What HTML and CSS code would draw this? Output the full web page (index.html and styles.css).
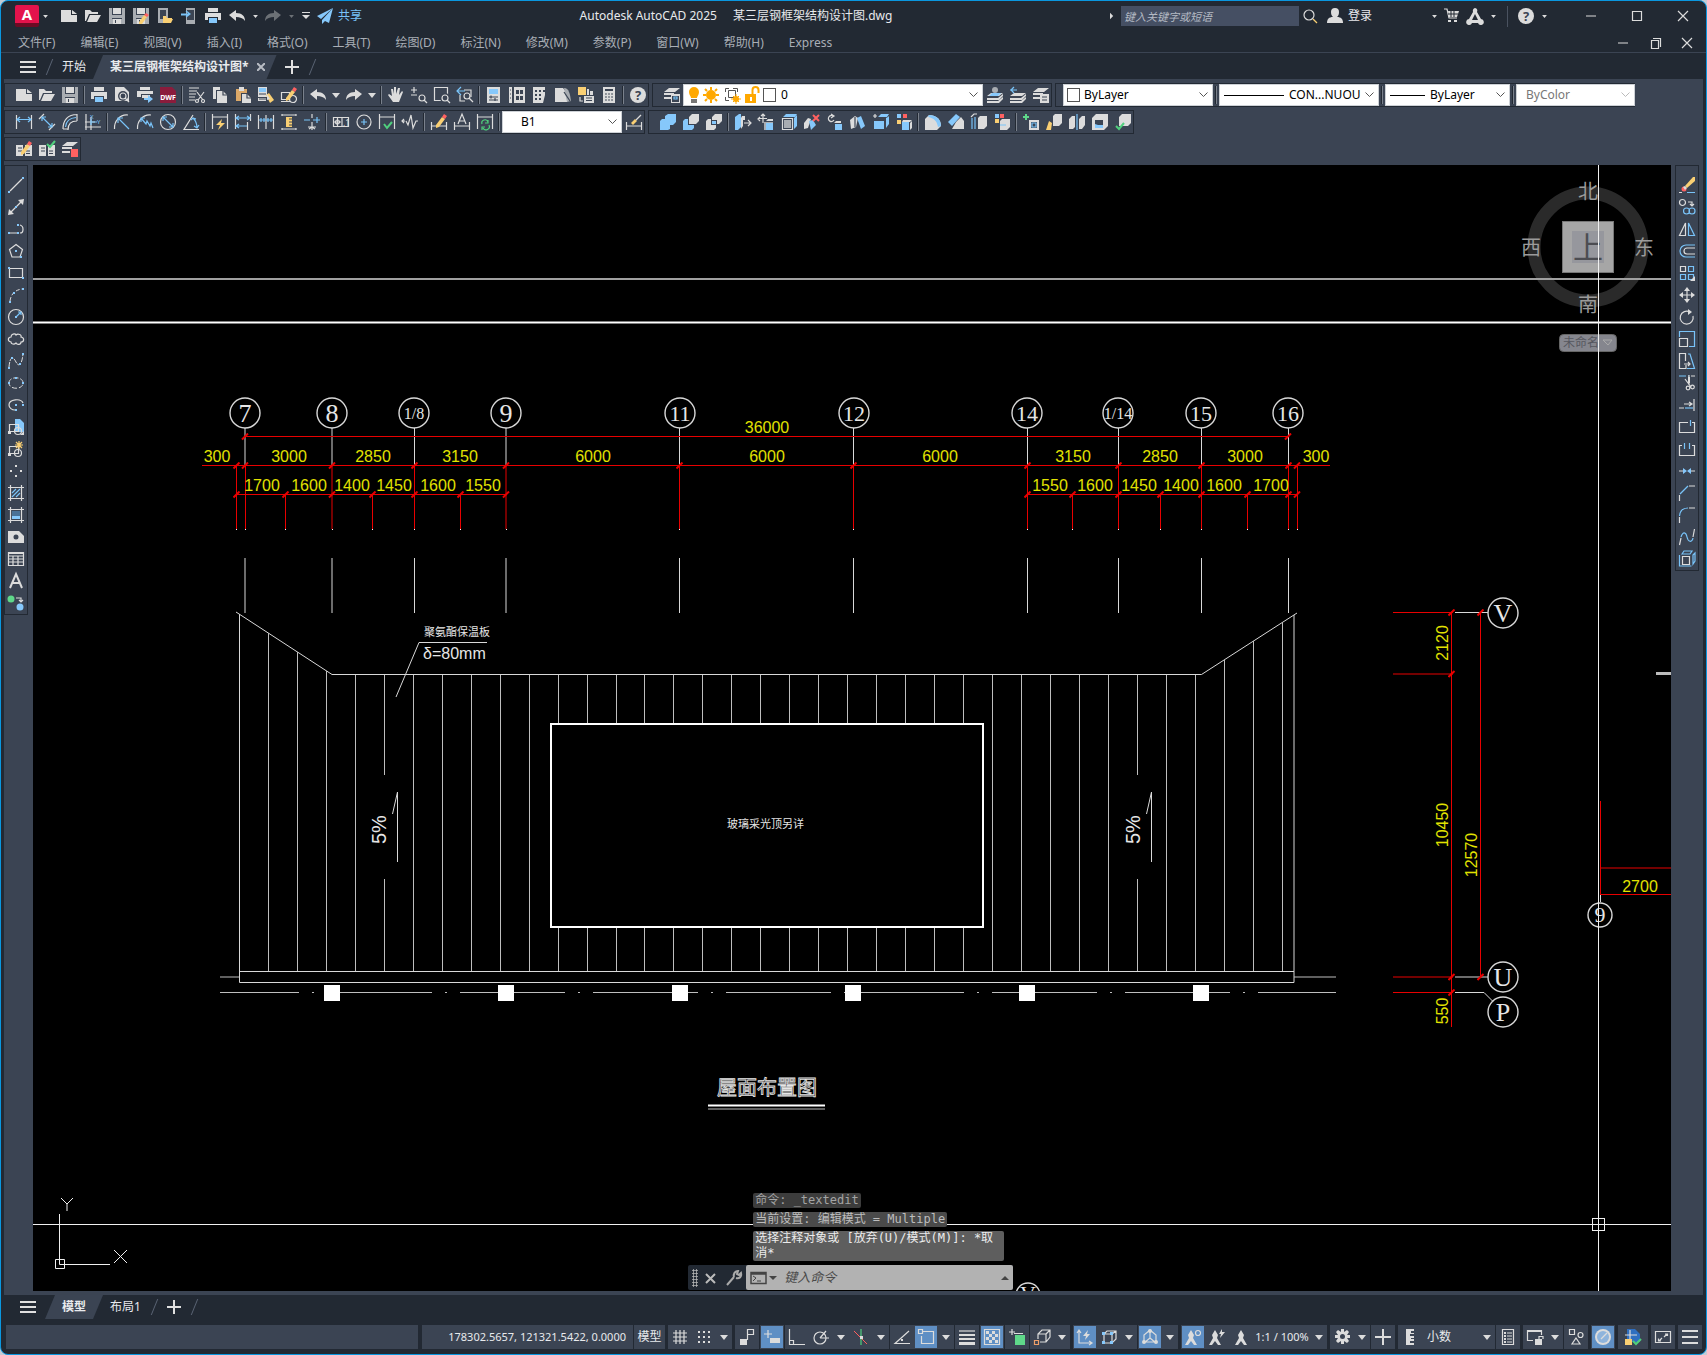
FILE: index.html
```html
<!DOCTYPE html>
<html lang="zh-CN">
<head>
<meta charset="utf-8">
<title>Autodesk AutoCAD 2025 - 某三层钢框架结构设计图.dwg</title>
<link rel="stylesheet" href="styles.css">
</head>
<body>
<div class="app">
  <header class="titlebar">
    <div class="quick">
      <button class="logo" aria-label="应用程序菜单">A</button>
      <span data-tools="v"></span>
      <div class="quick-tools" data-tools="new open save saveas mobopen mobsave print undo v redoOff vOff custom"></div>
      <button class="share"><svg viewBox="0 0 16 16" class="icon"><path class="B" d="M16 0 0 8l4 3zM16 0 5 12v4l3-3 4 2z"/></svg>共享</button>
    </div>
    <h1 class="title"><span>Autodesk AutoCAD 2025</span><span>某三层钢框架结构设计图.dwg</span></h1>
    <div class="account">
      <svg class="caret-right" viewBox="0 0 5 8"><path class="W" d="M0 0l4 4-4 4z"/></svg>
      <input class="search" type="text" aria-label="搜索" placeholder="键入关键字或短语">
      <span data-tools="find"></span>
      <button class="login"><svg viewBox="0 0 16 16" class="icon"><path class="W" d="M4 4a4 4 0 1 1 8 0c0 3-1 4-2 5 4 0 6 2 6 6H0c0-4 2-6 6-6-1-1-2-2-2-5z"/></svg>登录</button>
      <span data-tools="v cart autodesk v"></span>
      <i class="rule"></i>
      <span data-tools="help v"></span>
      <div class="window-buttons" data-tools="min max close"></div>
    </div>
  </header>

  <nav class="menubar">
    <div class="menus">
      <a href="#">文件(F)</a><a href="#">编辑(E)</a><a href="#">视图(V)</a><a href="#">插入(I)</a><a href="#">格式(O)</a><a href="#">工具(T)</a><a href="#">绘图(D)</a><a href="#">标注(N)</a><a href="#">修改(M)</a><a href="#">参数(P)</a><a href="#">窗口(W)</a><a href="#">帮助(H)</a><a href="#">Express</a>
    </div>
    <div class="doc-buttons" data-tools="min restore close"></div>
  </nav>

  <div class="tabs tabs-files">
    <button class="burger" aria-label="文件选项卡菜单"><i></i><i></i><i></i></button>
    <i class="slash"></i>
    <button class="tab">开始</button>
    <button class="tab active">某三层钢框架结构设计图*<svg class="tab-close" viewBox="0 0 8 8"><path d="M0 0l8 8M8 0L0 8"/></svg></button>
    <button class="plus" aria-label="新建"></button>
    <i class="slash"></i>
  </div>

  <main class="work">
    <div class="bars">
      <div class="bar-row">
        <div class="bar"><i class="grip"></i><span data-tools="new open save | print preview publish dwf | cut copy paste match block | undo V redo V | hand zoomrt zoomwin zoomprev | props center2 palettes sheets markup calc | help"></span></div>
        <div class="bar"><i class="grip"></i><span data-tools="layers"></span>
          <div class="combo combo-layer"><svg viewBox="0 0 79 20" class="layer-state"><path d="M5 7a5 5 0 1 1 10 0c0 3-2 4-2 6H7c0-2-2-3-2-6z" fill="#ffa800"/><path d="M7 14h6v4H7z" fill="#777"/><circle cx="27" cy="10" r="5" fill="#ffa800"/><path d="M27 2v3M27 15v3M19 10h3M32 10h3M21 4l2 2M33 4l-2 2M21 16l2-2M33 16l-2-2" stroke="#ffa800" stroke-width="2"/><path d="M41.500 7V3.500H45M49 3.500h4.500V7M41.500 12v3.500H45M44.500 5.500h7v7h-7z" stroke="#555" fill="none"/><circle cx="52" cy="14" r="3" fill="#ffa800"/><path d="M52 9v10M47 14h10M49 11l6 6M55 11l-6 6" stroke="#ffa800"/><path d="M61 9h11v9H61z" fill="#ffa800"/><path d="M68.500 9V5a3 3 0 0 1 6 0v3" stroke="#ffa800" stroke-width="2" fill="none"/><path d="M66 12h2v4h-2z" fill="#fff"/></svg><i class="swatch"></i><select aria-label="图层"><option>0</option></select></div>
          <span data-tools="laycur layprev laystate"></span></div>
        <div class="bar"><i class="grip"></i>
          <div class="combo combo-color"><i class="swatch"></i><select aria-label="颜色"><option>ByLayer</option></select></div><i class="sep"></i>
          <div class="combo combo-linetype"><i class="sample"></i><select aria-label="线型"><option>CON...NUOU</option></select></div><i class="sep"></i>
          <div class="combo combo-weight"><i class="sample"></i><select aria-label="线宽"><option>ByLayer</option></select></div><i class="sep"></i>
          <div class="combo combo-plot"><select aria-label="打印样式" disabled><option>ByColor</option></select></div></div>
      </div>
      <div class="bar-row">
        <div class="bar"><i class="grip"></i><span data-tools="dimlin dimali dimarc dimord | dimrad dimjog dimdia dimang | dimquick dimbase dimcont dimspace dimbreak | tol cmark inspect jogline | dimedit dimtext dimupdate |"></span>
          <div class="combo combo-dim"><select aria-label="标注样式"><option>B1</option></select></div><span data-tools="dimstyle"></span></div>
        <div class="bar"><i class="grip"></i><span data-tools="union subtract intersect | extrude moveface offface delface rotface taper copyface colface | filletedge chamedge copyedge coledge | imprint clean separate shell check"></span></div>
      </div>
      <div class="bar-row">
        <div class="bar"><i class="grip"></i><span data-tools="refedit refsave refdel"></span></div>
      </div>
    </div>

    <div class="stage">
      <aside class="side side-left"><i class="grip"></i><span data-tools="line xline pline polygon rect arc circle cloud spline ellipse ellarc insert mkblock points hatch gradient region table mtext addsel"></span></aside>
      <section class="canvas">
        <svg class="drawing" viewBox="33 165 1638 1126" role="img" aria-label="屋面布置图">
          <defs>
            <marker id="tick" markerUnits="userSpaceOnUse" markerWidth="8" markerHeight="8" refX="4" refY="4"><path d="M1 7l6-6" stroke="#e80000" stroke-width="2"/></marker>
            <marker id="tickv" markerUnits="userSpaceOnUse" markerWidth="8" markerHeight="8" refX="4" refY="4"><path d="M1 7l6-6" stroke="#e80000" stroke-width="2"/></marker>
          </defs>

          <!-- view cube -->
          <circle cx="1588" cy="247" r="54" fill="none" stroke="#2a2a2a" stroke-width="13"/>
          <rect x="1562.500" y="221.500" width="51" height="51" fill="#a6a6a6" stroke="#777"/>
          <rect x="1572" y="231" width="32" height="32" fill="#96979d"/>
          <text class="cube-face" x="1588" y="258">上</text>
          <g class="compass"><text x="1588" y="199">北</text><text x="1588" y="312">南</text><text x="1531" y="255">西</text><text x="1644" y="255">东</text></g>
          <rect x="1559.500" y="334.500" width="57" height="17" rx="4" fill="#85868e" stroke="#666"/>
          <text class="ucs-name" x="1563" y="347">未命名</text>
          <path d="M1603 340h9l-4 5z" fill="none" stroke="#aaa"/>

          <path class="frame-thin" d="M33 279h1638"/>
          <path class="frame-thick" d="M33 322.500h1638"/>

          <!-- axis grid -->
          <g class="axis">
            <path d="M245 428v38M332 428v38M414.500 428v38M506 428v38M679.500 428v38M853.500 428v38M1027.500 428v38M1118.500 428v38M1201.500 428v38M1288.500 428v38"/>
            <path d="M245 558v55M332 558v55M414.500 558v55M506 558v55M679.500 558v55M853.500 558v55M1027.500 558v55M1118.500 558v55M1201.500 558v55M1288.500 558v55"/>
            <path d="M1455 612.500h33M1455 977h33M1455 992.500h29l9 9M1600.500 894v8"/>
            <circle cx="245" cy="413" r="15"/><circle cx="332" cy="413" r="15"/><circle cx="414" cy="413" r="15"/><circle cx="506" cy="413" r="15"/><circle cx="680" cy="413" r="15"/><circle cx="854" cy="413" r="15"/><circle cx="1027" cy="413" r="15"/><circle cx="1118" cy="413" r="15"/><circle cx="1201" cy="413" r="15"/><circle cx="1288" cy="413" r="15"/>
            <circle cx="1503" cy="613" r="15"/><circle cx="1503" cy="977" r="15"/><circle cx="1503" cy="1012" r="15"/><circle cx="1600" cy="915" r="12"/><circle cx="1028" cy="1295" r="12"/>
          </g>
          <g class="bubble"><text x="245" y="422">7</text><text x="332" y="422">8</text><text x="506" y="422">9</text><text x="1503" y="622">V</text><text x="1503" y="986">U</text><text x="1503" y="1021">P</text></g>
          <g class="bubble two"><text x="680" y="421">11</text><text x="854" y="421">12</text><text x="1027" y="421">14</text><text x="1201" y="421">15</text><text x="1288" y="421">16</text><text x="1600" y="922">9</text><text x="1028" y="1301">V</text></g>
          <g class="bubble frac"><text x="414" y="419">1/8</text><text x="1118" y="419">1/14</text></g>

          <!-- horizontal and vertical dimensions -->
          <g class="dim">
            <path class="ticked" d="M245 436.500H1288"/>
            <path d="M202 465.500H1330"/>
            <path class="ticked" d="M236.500 465.500H245H332H414.500H506H679.500H853.500H1027.500H1118.500H1201.500H1288.500H1297"/>
            <path class="ticked" d="M236.500 494.500H285.500H332H372.500H414.500H460.500H506"/>
            <path class="ticked" d="M1027.500 494.500H1072.500H1118.500H1160.500H1201.500H1247.500H1288.500H1297"/>
            <path d="M236.500 466v63M245.500 466v63M285.500 495v34M332 466v63M372.500 495v34M414.500 466v63M460.500 495v34M506 466v63M679.500 466v63M853.500 466v63M1027.500 466v63M1072.500 495v34M1118.500 466v63M1160.500 495v34M1201.500 466v63M1247.500 495v34M1288.500 466v63M1297.500 466v63"/>
            <path d="M1393 612.500h60M1393 674h60M1393 977h60M1393 992.500h60M1451.500 992v35"/>
            <path class="ticked-v" d="M1451.500 612.500V674V977V992.500"/>
            <path class="ticked-v" d="M1480.500 612.500V977"/>
            <path d="M1600.500 801v94M1601 868h70M1601 894.500h70"/>
            <path class="dots" d="M236 529.500h1M245 529.500h1M285 529.500h1M332 529.500h1M372 529.500h1M414 529.500h1M460 529.500h1M506 529.500h1M679 529.500h1M853 529.500h1M1027 529.500h1M1072 529.500h1M1118 529.500h1M1160 529.500h1M1201 529.500h1M1247 529.500h1M1288 529.500h1M1297 529.500h1"/>
          </g>
          <g class="dim-text">
            <text x="767" y="433">36000</text>
            <text x="217" y="462">300</text><text x="289" y="462">3000</text><text x="373" y="462">2850</text><text x="460" y="462">3150</text><text x="593" y="462">6000</text><text x="767" y="462">6000</text><text x="940" y="462">6000</text><text x="1073" y="462">3150</text><text x="1160" y="462">2850</text><text x="1245" y="462">3000</text><text x="1316" y="462">300</text>
            <text x="262" y="491">1700</text><text x="309" y="491">1600</text><text x="352" y="491">1400</text><text x="394" y="491">1450</text><text x="438" y="491">1600</text><text x="483" y="491">1550</text>
            <text x="1050" y="491">1550</text><text x="1095" y="491">1600</text><text x="1139" y="491">1450</text><text x="1181" y="491">1400</text><text x="1224" y="491">1600</text><text x="1271" y="491">1700</text>
            <text x="1640" y="892">2700</text>
            <text transform="translate(1448 643) rotate(-90)">2120</text><text transform="translate(1448 825) rotate(-90)">10450</text><text transform="translate(1477 855) rotate(-90)">12570</text><text transform="translate(1448 1011) rotate(-90)">550</text>
          </g>

          <!-- roof plan -->
          <g class="roof">
            <path class="edge" d="M236 612l96 62.500h869.500L1297 613M239.500 614v368.500H1294V615M239.500 971.500H1294"/>
            <path d="M268.500 633v338M297.500 652v319M326.500 671v300M355.500 675v296M384.500 675v100M384.500 879v92M413.500 675v296M442.500 675v296M471.500 675v296M500.500 675v296M529.500 675v296M992.500 675v296M1021.500 675v296M1050.500 675v296M1079.500 675v296M1108.500 675v296M1137.500 675v100M1137.500 879v92M1166.500 675v296M1195.500 675v296M1224.500 660v311M1253.500 641v330M1282.500 622v349"/>
            <path d="M558.500 675v48M587.500 675v48M616.500 675v48M644.500 675v48M673.500 675v48M702.500 675v48M731.500 675v48M760.500 675v48M789.500 675v48M818.500 675v48M847.500 675v48M876.500 675v48M905.500 675v48M934.500 675v48M963.500 675v48"/>
            <path d="M558.500 928v43M587.500 928v43M616.500 928v43M644.500 928v43M673.500 928v43M702.500 928v43M731.500 928v43M760.500 928v43M789.500 928v43M818.500 928v43M847.500 928v43M876.500 928v43M905.500 928v43M934.500 928v43M963.500 928v43"/>
            <path d="M220 977h19M1294 977h42"/>
            <path d="M220 992.500h1116" stroke-dasharray="105 13 2 13" stroke-dashoffset="26"/>
            <rect class="skylight" x="551" y="724" width="432" height="203"/>
            <path class="edge" d="M397.500 862v-70l-5 22M1151.500 862v-70l-5 22M396 697l23-54.500h68"/>
          </g>
          <path fill="#fff" d="M324 985h16v16h-16zM498 985h16v16h-16zM672 985h16v16h-16zM845 985h16v16h-16zM1019 985h16v16h-16zM1193 985h16v16h-16z"/>
          <g class="note">
            <text x="424" y="636">聚氨酯保温板</text>
            <text x="727" y="828">玻璃采光顶另详</text>
            <text class="latin" x="423" y="659">δ=80mm</text>
            <text class="slope" transform="translate(386 844) rotate(-90)">5%</text>
            <text class="slope" transform="translate(1140 844) rotate(-90)">5%</text>
            <text class="caption" x="717" y="1095">屋面布置图</text>
          </g>
          <path d="M708 1105.500h117" stroke="#fff" stroke-width="2"/>
          <path d="M708 1109h117" stroke="#bbb"/>
          <path d="M1656 673.500h15" stroke="#bbb" stroke-width="3"/>

          <!-- UCS icon and crosshair -->
          <g class="ucs"><path d="M59.500 1214v50.500H110M55.500 1259.500h9v9h-9z"/><path d="M61 1198l6 6 6-6M67 1204v7M114 1250l13 13M127 1250l-13 13"/></g>
          <g class="cross"><path d="M1598.500 165v1126M33 1224.500h1638"/><rect x="1592.500" y="1218.500" width="12" height="12"/></g>
        </svg>

        <div class="command">
          <p class="log old">命令: _textedit</p>
          <p class="log">当前设置: 编辑模式 = Multiple</p>
          <p class="log recent">选择注释对象或 [放弃(U)/模式(M)]: *取消*</p>
          <div class="command-line">
            <i class="command-grip"></i><span class="command-tools" data-tools="x wrench"></span>
            <label class="prompt"><svg viewBox="0 0 28 14"><path d="M1 1.500h15v11H1zM1 3h15" fill="none" stroke="#444" stroke-width="1.500"/><path d="M3 5l3 2-3 3M7 10h4" fill="none" stroke="#444"/><path d="M19 5h8l-4 4z" fill="#444"/></svg><input type="text" placeholder="键入命令" aria-label="命令"><svg class="up" viewBox="0 0 8 4"><path d="M0 4l4-4 4 4z" fill="#444"/></svg></label>
          </div>
        </div>
      </section>
      <aside class="side side-right"><i class="grip"></i><span data-tools="erase copyobj mirror offset array move rotate scale stretch trim extend breakpt break join chamfer fillet blend explode"></span></aside>
    </div>
  </main>

  <div class="tabs tabs-layout">
    <button class="burger" aria-label="布局菜单"><i></i><i></i><i></i></button>
    <button class="tab active">模型</button>
    <button class="tab">布局1</button>
    <i class="slash"></i>
    <button class="plus" aria-label="新建布局"></button>
    <i class="slash"></i>
  </div>

  <footer class="status">
    <div class="seg fill"></div>
    <div class="group"><button class="seg coords">178302.5657, 121321.5422, 0.0000</button><button class="seg model">模型</button></div>
    <div class="group"><div class="seg" data-tools="grid snap v"></div></div>
    <div class="group"><div class="seg" data-tools="infer"></div><div class="seg" data-tools="dyn*"></div><div class="seg" data-tools="ortho polar v iso v"></div><div class="seg" data-tools="otrack osnap* v"></div><div class="seg" data-tools="lweight"></div><div class="seg" data-tools="transp*"></div><div class="seg" data-tools="cycle"></div><div class="seg" data-tools="osnap3d v"></div></div>
    <div class="group"><div class="seg" data-tools="ducs* filter v"></div><div class="seg" data-tools="gizmo* v"></div></div>
    <div class="group"><div class="seg"><span data-tools="annvis* annauto ann"></span><button class="scale">1:1 / 100%</button><span data-tools="v"></span></div></div>
    <div class="group"><div class="seg" data-tools="gear v"></div><div class="seg" data-tools="add"></div></div>
    <div class="group"><div class="seg"><span data-tools="ruler"></span><button class="units">小数</button><span data-tools="v"></span></div><div class="seg" data-tools="qprops"></div></div>
    <div class="group"><div class="seg" data-tools="lockui v"></div><div class="seg" data-tools="isolate"></div></div>
    <div class="group"><div class="seg" data-tools="perf*"></div></div>
    <div class="group"><div class="seg wide" data-tools="trusted"></div></div>
    <div class="group"><div class="seg" data-tools="full"></div></div>
    <div class="group"><div class="seg" data-tools="menu"></div></div>
  </footer>
</div>
<script src="icons.js"></script>
</body>
</html>
```
FILE: styles.css
```css
* { box-sizing: border-box; }
html { background: #c3ccd6; }
body {
  margin: 0;
  font: 12px/16px "Noto Sans", "Noto Sans CJK SC", sans-serif;
  color: #e8eaed;
}
button { font: inherit; color: inherit; background: none; border: 0; padding: 0; margin: 0; }
svg { display: block; }
span[data-tools] { display: contents; }

.app {
  min-height: 100vh;
  display: flex;
  flex-direction: column;
  background: #222933;
  border: 1px solid #0a97e0;
  border-radius: 8px;
  overflow: hidden;
}

/* icon colours: lower case strokes, upper case fills */
.w, .b, .y, .g, .r, .k, .o { fill: none; stroke-width: 1.2; }
.w { stroke: #dcdcdc; } .b { stroke: #79c3f8; } .y { stroke: #f9cf73; } .g { stroke: #4fcf7d; }
.r { stroke: #ff5f5f; } .k { stroke: #3b4453; } .o { stroke: #f0a06a; }
.W { fill: #dcdcdc; } .B { fill: #86c8fb; } .Y { fill: #f9cf73; } .G { fill: #5fd88a; }
.R { fill: #ff6161; } .K { fill: #3b4453; } .A { fill: #a9adb2; } .D { fill: #6b7079; }
.icon { width: 16px; height: 16px; overflow: visible; }
.tool { width: 23px; height: 22px; flex: none; display: flex; align-items: center; justify-content: center; }
.drop { width: 13px; flex: none; display: flex; align-items: center; justify-content: center; }
.drop svg { width: 8px; height: 5px; }
.off { opacity: .4; }

/* title bar */
.titlebar { height: 30px; display: flex; align-items: center; justify-content: space-between; padding-left: 14px; }
.quick, .account, .quick-tools { display: flex; align-items: center; }
.logo { width: 24px; height: 22px; background: #e4134c; border-bottom: 4px solid #6d0b24; border-radius: 2px; font: bold 15px/18px "Open Sans", sans-serif; color: #fff; }
.quick-tools { padding-left: 6px; }
.quick .tool { width: 24px; }
.quick-tools .tool:last-child { width: 18px; }
.quick .drop { width: 12px; }
.quick .drop svg { width: 5px; height: 3px; }
.quick > .drop svg { width: 7px; height: 4px; }
.share { display: flex; align-items: center; gap: 5px; padding-left: 2px; color: #79c3f8; }
.title { margin: 0; font-size: 12px; font-weight: 400; display: flex; gap: 16px; }
.caret-right { width: 4px; height: 8px; margin-right: 7px; }
.search { width: 178px; height: 20px; border: 0; padding: 0 3px; background: #454f63; color: #fff; font: italic 11px "Noto Sans", "Noto Sans CJK SC", sans-serif; }
.search::placeholder { color: #b4bac4; opacity: 1; }
.login { display: flex; align-items: center; gap: 5px; padding: 0 56px 0 5px; }
.account .drop svg { width: 5px; height: 3px; }
.account > .drop { width: 13px; }
.account > .tool .icon { width: 15px; height: 15px; }
.rule { width: 1px; height: 21px; background: #4a5260; margin: 0 7px; }
.window-buttons { display: flex; padding-left: 17px; }
.window-buttons .tool { width: 46px; }

/* menus and tabs */
.menubar { height: 22px; display: flex; align-items: center; justify-content: space-between; padding: 2px 0 0 17px; border-bottom: 1px solid #3b4453; }
.menus { display: flex; gap: 25px; }
.menus a { color: #a9aeb6; text-decoration: none; }
.doc-buttons { display: flex; padding-right: 3px; }
.doc-buttons .tool { width: 32px; height: 18px; }
.tabs { display: flex; align-items: center; }
.tabs-files { height: 26px; padding: 2px 0 0 19px; }
.tabs-layout { height: 24px; padding-left: 19px; margin-bottom: 6px; }
.burger { width: 16px; height: 12px; display: flex; flex-direction: column; justify-content: space-between; }
.burger i { height: 2px; width: 16px; background: #e0e0e0; }
.slash { width: 1px; height: 16px; background: #5a6474; transform: skewX(-22deg); margin: 0 12px 0 13px; }
.tab { height: 24px; }
.tab.active { background: #3b4453; font-weight: 700; clip-path: polygon(10px 0, 100% 0, calc(100% - 10px) 100%, 0 100%); padding: 0 17px; display: flex; align-items: center; }
.tabs-files .tab.active { margin: 0 8px 0 7px; padding-right: 12px; }
.tab-close { width: 8px; height: 8px; margin-left: 8px; }
.tab-close path { stroke: #b8bcc4; stroke-width: 2; }
.tabs-layout .tab.active { margin: 0 7px 0 9px; }
.plus { width: 14px; height: 14px; background: linear-gradient(#e0e0e0, #e0e0e0) center / 14px 2px no-repeat, linear-gradient(#e0e0e0, #e0e0e0) center / 2px 14px no-repeat; }

/* docked toolbars */
.work { flex: 1; display: flex; flex-direction: column; margin: 0 3px; background: #3b4453; padding-bottom: 4px; }
.bars { display: flex; flex-direction: column; gap: 3px; padding: 4px 0; }
.bar-row { display: flex; gap: 3px; }
.bar { height: 24px; display: flex; align-items: center; box-shadow: inset 0 0 0 1px #222933; }
.grip { flex: none; width: 8px; height: 14px; background: radial-gradient(circle, #c5c9cf 35%, transparent 45%) 3px 0 / 2px 2px; background-clip: content-box; padding: 0 2px 0 3px; }
.sep { flex: none; width: 6px; height: 18px; background: linear-gradient(90deg, transparent 2px, #222933 2px, #222933 3px, #7a818c 3px, #7a818c 4px, transparent 4px); }
.combo { height: 22px; display: flex; align-items: center; background: #fff; border: 1px solid #cdd1d6; color: #000; }
.combo select { flex: 1; min-width: 0; height: 20px; border: 0; padding: 0 16px 0 5px; appearance: none; font: inherit; color: inherit; background: url("data:image/svg+xml,%3Csvg xmlns='http://www.w3.org/2000/svg' width='9' height='6'%3E%3Cpath d='M.5 .5l4 4 4-4' fill='none' stroke='%23555'/%3E%3C/svg%3E") right 4px center no-repeat; }
.combo select:disabled { color: #777; opacity: 1; background-image: url("data:image/svg+xml,%3Csvg xmlns='http://www.w3.org/2000/svg' width='9' height='6'%3E%3Cpath d='M.5 .5l4 4 4-4' fill='none' stroke='%23bbb'/%3E%3C/svg%3E"); }
.combo-layer { width: 300px; }
.layer-state { width: 79px; height: 20px; }
.swatch { width: 13px; height: 14px; border: 1px solid #555; flex: none; }
.combo-color { width: 150px; padding-left: 3px; }
.combo-color select { padding-left: 4px; }
.combo-linetype { width: 160px; padding-left: 4px; }
.combo-weight { width: 125px; padding-left: 4px; }
.sample { flex: none; height: 1px; background: #000; width: 60px; }
.combo-weight .sample { width: 35px; }
.combo-linetype select { padding-right: 8px; }
.combo-plot { width: 119px; }
.combo-plot select { padding-left: 9px; }
.combo-dim { width: 120px; }
.combo-dim select { padding-left: 18px; }

/* stage */
.stage { flex: 1; display: flex; align-items: stretch; }
.side { width: 24px; align-self: flex-start; display: flex; flex-direction: column; box-shadow: inset 0 0 0 1px #222933; padding-bottom: 1px; }
.side-left { margin-right: 5px; }
.side-right { margin: 0 4px; }
.side .grip { width: 14px; height: 9px; margin-left: 4px; padding: 3px 0 2px; }
.side .tool { height: 22px; width: 24px; }
.canvas { flex: 1; min-width: 0; background: #000; position: relative; }
.drawing { width: 100%; height: auto; }
.drawing text { text-anchor: middle; }
.frame-thin { stroke: #a0a0a0; stroke-width: 2; }
.frame-thick { stroke: #fff; stroke-width: 2; }
.axis { fill: none; stroke: #d8d8d8; }
.axis circle { stroke-width: 1.4; }
.bubble { font: 26px "Liberation Serif", serif; fill: #e6e6e6; }
.bubble.two { font-size: 22px; }
.bubble.frac { font-size: 16px; }
.dim path { fill: none; stroke: #e80000; }
.dim .dots { stroke: #fff; }
.ticked { marker: url(#tick); }
.ticked-v { marker: url(#tickv); }
.dim-text { font: 16px "Liberation Sans", sans-serif; fill: #e2e200; }
.roof { fill: none; stroke: #bebebe; }
.roof .edge { stroke: #d8d8d8; }
.roof .skylight { stroke: #fff; stroke-width: 2; }
.drawing .note text { text-anchor: start; }
.note { font: 11px "Noto Sans CJK SC", sans-serif; fill: #e6e6e6; }
.note .latin { font: 16px "Liberation Sans", sans-serif; }
.note .slope { font: 20px "Liberation Sans", sans-serif; }
.note .caption { font-size: 20px; fill: #222; stroke: #e6e6e6; stroke-width: .8; }
.compass { font: 20px "Noto Sans CJK SC", sans-serif; fill: #9b9b9b; }
.cube-face { font: 30px "Noto Sans CJK SC", sans-serif; fill: #4c4d52; }
.drawing .ucs-name { font: 12px "Noto Sans CJK SC", sans-serif; fill: #55565e; text-anchor: start; }
.ucs, .cross { fill: none; stroke: #f0f0f0; }

/* floating command line */
.command { position: absolute; left: 40%; bottom: 1px; width: 325px; display: flex; flex-direction: column; align-items: flex-start; gap: 4px; }
.log { margin: 0 0 0 65px; padding: 0 2px; max-width: 251px; border-radius: 2px; background: #4a4a4a; color: #bdbdbd; font: 12px/15px "DejaVu Sans Mono", "Noto Sans CJK SC", monospace; word-break: break-all; }
.log.old { background: #3c3c3c; color: #a4a4a4; }
.log.recent { background: #5e5e5e; color: #ececec; }
.command-line { width: 100%; height: 25px; display: flex; align-items: center; background: #222933; border-radius: 2px; }
.command-grip { width: 6px; height: 18px; margin: 0 0 0 4px; background: radial-gradient(circle, #b0b0b0 45%, transparent 55%) 0 0 / 3px 3px; }
.command-tools .tool { width: 23px; }
.prompt { margin-left: auto; width: 267px; height: 25px; display: flex; align-items: center; background: #b2b2b2; padding: 0 4px; border-radius: 2px; }
.prompt svg { width: 28px; height: 14px; flex: none; }
.prompt input { flex: 1; min-width: 0; border: 0; background: none; padding: 0 6px 2px; font: italic 13px "Noto Sans CJK SC", sans-serif; }
.prompt input::placeholder { color: #4a4a4a; opacity: 1; }
.prompt .up { width: 8px; height: 4px; }

/* status bar */
.status { display: flex; gap: 3px; padding: 0 4px 0 5px; margin-bottom: 5px; }
.group { display: flex; gap: 1px; }
.seg { height: 24px; min-width: 24px; display: flex; align-items: center; background: #3b4453; }
.seg.fill { flex: 1; margin-right: 1px; }
.seg.wide .tool { width: 30px; }
.coords { width: 211px; justify-content: flex-end; padding-right: 7px; font-size: 11px; }
.model { width: 31px; justify-content: center; }
.seg .tool { width: 24px; height: 24px; }
.seg .drop { width: 16px; }
.seg .tool.on { background: #5f8fc4; border: 1px solid #3b4453; }
.scale { width: 58px; text-align: center; font-size: 11px; white-space: nowrap; }
.units { width: 57px; text-align: left; padding-left: 5px; }
```
FILE: icons.js
```js
// Each icon is a list of "class:path" parts on a 16 x 16 grid; parts that start with "<" are raw SVG.
const C = (x, y, r) => `M${x - r} ${y}a${r} ${r} 0 1 0 ${2 * r} 0a${r} ${r} 0 1 0 ${-2 * r} 0z`;
const PENCIL = ';Y:M5 11l6-8 3 2-6 8-3 1z;R:M11 3l2-3 3 2-2 3z';
const DIMBAR = 'w:M.5 0v15M15.5 0v15M0 3h16';
const LOW = 'w:M.5 8v8M15.5 8v8M1 12h14';
const LAYERS = 'W:M5 1h11l-5 4H0zM0 6h10v2H0zM0 10h8v2H0z';
const STACK = 'W:M4 6h12l-4 3H0zM0 11h11l5-4v2l-4 4H0zM0 14h11l5-4v2l-4 4H0z';
const ICONS = {
  new: 'W:M0 2h10v5h6v7H0zM11 2l5 4h-5z',
  open: 'W:M0 2h5l2 2h6v2H4L1 13H0zM5 7h11l-4 7H2z',
  save: 'A:M0 0h16v16H0z;W:M4 0h8v6H4zM4 11h8v5H4z;K:M3 0h1v7H3zM12 0h1v7h-1zM3 6h10v1H3zM3 10h10v1H3zM6 12h1v3H6z',
  mobopen: 'A:M1 0h10v15H1z;K:M3 2h6v9H3z;Y:M6 8h3l1 2h5v1h1l-2 4H6z',
  mobsave: 'A:M5 0h9v16H5z;K:M6 2h7v10H6z;b:M0 6h8M5 3l4 3-4 3M0 7h8',
  print: 'W:M3 0h10v4H3zM0 5h16v7h-3V9H3v3H0z;B:M4 10h8v5H4z',
  undo: 'W:M0 7l7-5v3c6 0 9 3 9 8-2-3-5-4-9-4v4z',
  redo: 'W:M16 7L9 2v3C3 5 0 8 0 13c2-3 5-4 9-4v4z',
  custom: 'W:M4 4h8v1H4zM4 7h8l-4 4z',
  find: `w:${C(7, 7, 5)};y:M11 11l4 4`,
  cart: 'w:M0 1h3l2 9h8;W:M4 3h11l-2 6H5z;<path d="M7 3v6M10 3v6M4 6h10" stroke="#222933"/>;W:M4 12h3v2H4zM10 12h3v2h-3z',
  autodesk: 'W:M8 0a3 3 0 0 1 2 4l4 7a3 3 0 1 1-3 4H5a3 3 0 1 1-3-4l4-7a3 3 0 0 1 2-4z;<path d="M8 6l-3 6h6z" fill="#222933"/>',
  help: `W:${C(8, 8, 8)};<text x="8" y="13" text-anchor="middle" font-size="13" font-weight="700" fill="#3b4453">?</text>`,
  min: 'w:M3 8h10', max: 'w:M3.500 3.500h9v9h-9z', close: 'w:M3 3l10 10M13 3L3 13',
  restore: 'w:M4.500 5.500h7v8h-7zM6 3.500h7.500V12',
  x: '<path d="M4 4l9 9M13 4l-9 9" stroke="#bbb" stroke-width="2"/>',
  wrench: '<path d="M2 15l7-8M9 7c-1-3 1-6 4-6l-1 3 2 1 2-2c1 4-2 6-5 5" stroke="#aaa" stroke-width="2" fill="none"/>',
  preview: `W:M1 0h9l5 5v9H1z;K:${C(9, 9, 5)};w:${C(9, 9, 3)};w:M11 11l4 4`,
  publish: 'W:M3 0h10v3H3zM0 4h16v3H0zM0 7h4v3H0zM5 8h8v3H5z;B:M7 11h4V8l5 4-5 4v-3H7z',
  dwf: '<path d="M0 0h12l4 4v12H0z" fill="#8b1c3c"/><text x="8" y="13" text-anchor="middle" font-size="7" font-weight="700" fill="#fff">DWF</text>',
  cut: `w:M0 1h10M0 4h8M0 7h7M0 10h6M0 13h6M8 5l6 8M15 5l-6 8;w:${C(8, 14, 1.5)}${C(14, 14, 1.5)}`,
  copy: 'W:M1 0h7v3H4v9H1zM5 4h6l4 4v8H5z;k:M11 4v4h4',
  paste: '<path d="M1 2h11v4H6v8H1z" fill="#dba868"/>;W:M4 0h5v4H4zM7 7h5l4 4v5H7z;k:M12 7v4h4',
  match: 'W:M0 0h9v10H0zM0 11h8v3H0z;B:M1 1h7v4H1z;k:M1 7h7M1 12h7;Y:M8 8l3-2 5 7-4 3z;W:M9 7l3 5-3 1z',
  block: `w:M.500 5.500h8v7h-8zM0 14.500h10;w:${C(12, 12, 3.5)}` + PENCIL,
  hand: 'W:M5 15L0 8l1-1 3 2-1-7h2l1 5V0h2v7l2-6h2l-1 7 3-4 1 1-4 10z',
  zoomrt: `w:M3 0v6M0 3h6M0 8h6;w:${C(11, 11, 3)};w:M13 13l3 3`,
  zoomwin: `w:M.500.500h13v13h-13z;K:${C(11, 11, 5)};w:${C(11, 11, 3)};w:M13 13l3 3`,
  zoomprev: `w:M7 3h7v7M3 8v6h5;b:M0 4h8M4 0L0 4l4 4;w:${C(10, 9, 3)};w:M12 11l4 4`,
  props: 'W:M1 0h13v16H1z;B:M3 2h9v5H3z;k:M3 10h9M3 13h9M5 8.500v3M9 11v3',
  center2: 'W:M0 0h3v16H0zM5 0h11v16H5z;K:M7 3h3v4H7zM11 3h3v4h-3zM7 9h3v4H7zM11 9h3v4h-3z;k:M1 3h1M1 7h1M1 11h1',
  palettes: 'W:M1 0h12v8l-2 8H1z;K:M3 3h2v2H3zM3 7h2v2H3zM3 11h2v2H3zM7 3h2v2H7zM7 7h2v2H7zM7 11h2v2H7zM11 3h2v2h-2z',
  sheets: 'W:M0 1h8l4 5v9H0z;A:M9 1c5 0 6 6 7 13l-4 1z;k:M9 5l6 9',
  markup: 'Y:M0 0h8v8H0z;W:M9 2h2v6H9zM12 4h3v4h-3zM6 9h10v7H6z;k:M8 11h6M8 13.500h6;w:M2 10v4h3',
  calc: 'W:M2 0h12v16H2z;K:M4 2h8v2H4z;k:M4 7h8M4 10h8M4 13h8;w:M6.500 5v11M9.500 5v11',
  layers: LAYERS + ';W:M7 7h9v9H7z;K:M8 9h7v6H8z;b:M10 10h3v2h-3z',
  laycur: STACK + ';B:M2 9l3-3h9l-3 3z;A:' + C(8, 3, 3),
  layprev: STACK + ';b:M0 3h7M4 0L1 3l3 3', laystate: LAYERS + ';W:M7 7h9v9H7z;k:M9 10h5M9 13h5',
  dimlin: 'w:M.5 1v14M15.500 1v14;b:M1 5.500h14M4 3L1 5.500 4 8M12 3l3 2.500L12 8',
  dimali: 'w:M0 5l5-5M10 16l6-6;b:M3 3l10 10M3 7V3h4M13 9v4H9',
  dimarc: 'w:M1 15C1 6 6 .500 15 .500M6 16c0-6 3-9 9-9M1 15h5M15 0v7;b:M3.500 13C4 7 8 4 14 3.500',
  dimord: 'w:M1 0v16M0 13h16M6 3v13M0 8h10;b:M6 8h6M6 5v6;<text x="5" y="5" font-size="6" fill="#79c3f8">X</text><text x="12" y="10" font-size="6" fill="#79c3f8">Y</text>',
  dimrad: 'w:M.500 15C0 7 6 0 14 1;b:M4 4l11 11M4 9V4h5',
  dimjog: 'w:M.500 15C0 7 6 0 14 1;b:M4 4l5 6 1-3 3 5 1-3 2 5M4 8V4h4',
  dimdia: `w:${C(8, 8, 7.5)};b:M3 3l10 10M3 7V3h4M13 9v4H9`,
  dimang: 'w:M16 15.500H1L10 1;b:M10 4c3 3 4 6 4 10M8 6l2-2 3 1M11 12l3 2 2-3',
  dimquick: DIMBAR + ';Y:M10 5l-6 6h4l-2 5 7-7H9z',
  dimbase: 'w:M.500 0v15M15.500 0v7M12.500 8v8;b:M1 4h14M1 12h11M4 2L1 4l3 2M12 2l3 2-3 2M4 10l-3 2 3 2',
  dimcont: 'w:M.500 1v14M8 1v14M15.500 1v14;b:M1 6h14M3 4v4M6 4v4M10 4v4M13 4v4',
  dimspace: 'w:M1 1h14M1 15h14M1 0v2M15 0v2M1 14v2M15 14v2;Y:M5 3h6v10H5z;<path d="M8 5h3M8 8h3M8 11h3" stroke="#3b4453"/>',
  dimbreak: 'b:M0 6h6M9 6h7M13 3v6;w:M8 0v4M8 8v8M4 13h8M5 15l3-2 3 2',
  tol: `w:M.500 3.500h15v9H.500zM9 3v10;w:${C(4.5, 8, 2)};w:M4.500 4v8M1 8h7;<text x="10" y="12" font-size="8" fill="#dcdcdc">.1</text>`,
  cmark: `w:${C(8, 8, 7)};b:M8 5v6M5 8h6`, inspect: DIMBAR + ';<path d="M5 10l3 4 5-6" fill="none" stroke="#4fcf7d" stroke-width="2"/>',
  jogline: 'w:M0 7h3M2 5L0 7l2 2M4 7l2 4L9 1l2 13 3-7h2',
  dimedit: LOW + PENCIL, dimtext: LOW + ';w:M4 10L8 0l4 10M5 7h6',
  dimupdate: DIMBAR + ';g:M5 10a3 3 0 0 1 6-2M11 6v3H8M12 11a3 3 0 0 1-6 3M5 16v-3h3', dimstyle: LOW + ';Y:M5 9l4-4 2 2-4 4z;w:M10 6l5-5',
  union: 'B:M5 2l3-2h8v8l-3 3h-3v4l-2 1H0V7l2-2h3z',
  subtract: 'B:M0 7l2-2h3v6h6v3l-2 2H0z;W:M6 3l3-3h7v7l-3 3H6z',
  intersect: 'W:M6 3l3-3h7v7l-3 3h-2V6H6zM0 7l2-2h3v6h5v3l-2 2H0z;B:M6 7h4v3H6z',
  extrude: 'B:M0 3l4-3h2v13l-3 3H0z;W:M7 2h3v4H8v6l-2 3V4z;w:M9 9h7M13 6l3 3-3 3',
  moveface: 'w:M5 0v9M0 4.500h9M3 2l2-2 2 2M2 3L0 5l2 2;W:M8 7l2-2h5v2z;A:M6 8h9v8H6z;B:M8 9h7v7H8z',
  offface: 'w:M1.500 4.500h10v11h-10z;B:M2 3l3-3h11l-2 3zM13 4l3-3v11l-3 3z;A:M3 6h7v8H3z',
  delface: 'W:M0 9l4-5 3 1-3 9-4 1z;B:M5 7l4-1 3 5-5 5z;<path d="M9 1l6 6M15 1L9 7" stroke="#ff6161" stroke-width="2"/>',
  rotface: 'w:M6 2a3 3 0 1 0 1 4M4 0l3 2-3 2;W:M7 9l2-2h5v2z;B:M8 10h7v6H8z',
  taper: 'W:M0 6l5-4 3 2-2 9-5 2z;B:M7 4l4-2 4 10-4 3z;k:M5 3v10', copyface: 'B:M5 3l3-3h8l-2 3zM15 3l1-1v8l-3 4V4zM1 7h10v8H1z;w:M0 2h4M2 0v4',
  colface: 'R:M7 0h4v4H7z;B:M1 0h4v4H1zM6 8h7v8H6z;Y:M1 6h4v4H1z;W:M7 6h9l-2 2H6zM14 9l2-2v7l-2 2z',
  filletedge: 'W:M0 5l4-4c8 0 12 5 12 11l-4 4H0z;B:M4 1c7 0 12 4 12 11l-3 1C12 7 9 4 3 3z',
  chamedge: 'W:M8 8l5-5 3 4v8H4z;B:M0 8l8-8 4 3-8 9z', copyedge: 'W:M7 4l2-2h7v10l-3 3H7z;b:M1 4v11M4 3v12;w:M0 3l3-3h3',
  coledge: 'R:M6 0h4v4H6z;B:M1 0h4v4H1z;Y:M1 5h4v4H1z;W:M6 7l2-2h8v8l-3 3H6z;b:M6 11h6',
  imprint: 'G:M2 0h2v2h2v2H4v2H2V4H0V2h2z;W:M6 6h10v10H6z;K:M8 8h6v6H8z;b:M9 9h4v4H9z',
  clean: 'W:M7 2l2-2h7v9l-3 3H7z;Y:M3 7l3 2-1 7H0z', separate: 'W:M0 5l3-3h3v11l-2 2H0zM10 5l3-3h3v9l-3 4h-3z;b:M8 0v16',
  shell: 'W:M0 4l4-4h12v12l-4 4H0z;K:M3 6h8v8H3z;B:M3 14v-4l3 1h5v3z',
  check: 'W:M4 3l3-3h9v9l-3 3H4z;<path d="M1 12l3 3 5-6" fill="none" stroke="#4fcf7d" stroke-width="2"/>',
  refedit: 'W:M0 4h7v11H0zM9 4h7v11H9z;k:M2 7h4M2 10h4M10 10h4M10 12.500h4' + PENCIL,
  refsave: 'W:M0 4h7v11H0zM9 4h7v11H9z;k:M2 7h4M2 10h4M10 10h4M10 12.500h4;<path d="M8 3l3 3 5-6" fill="none" stroke="#4fcf7d" stroke-width="2"/>',
  refdel: LAYERS + ';R:M9 8h7v8H9z',
  line: 'w:M2 14L14 2;B:M0 14h2v2H0zM14 0h2v2h-2z', xline: 'w:M3 13L13 3;W:M0 16l1-6 5 5zM16 0l-1 6-5-5z;B:M7 7h2v2H7z',
  pline: 'w:M2 12h8M12 4c4 1 4 8 0 8;B:M0 11h2v2H0zM9 11h2v2H9zM9 3h2v2H9z',
  polygon: 'w:M8 1.500l6.500 5L12 14H4L1.500 6.500z;B:M7 7h2v2H7zM12 13h2v2h-2z', rect: 'w:M1.500 3.500h13v9h-13z;B:M0 2h2v2H0zM14 12h2v2h-2z',
  arc: '<path d="M2 14C3 7 7 3 14 2" fill="none" stroke="#dcdcdc" stroke-dasharray="4 2"/>;B:M1 14h2v2H1zM5 5h2v2H5zM14 1h2v2h-2z', circle: `w:${C(8, 8, 7.5)};b:M8 8l5-5M10 3h3v3;B:M7 7h2v2H7z`,
  cloud: 'w:M3 11c-4-1-3-5 0-5 0-3 4-4 5-2 2-2 6 0 5 2 4 1 3 5 0 5 0 3-4 3-5 1-2 2-5 1-5-1z', spline: '<path d="M1 14C2 3 5 3 8 9s6 2 7-8" fill="none" stroke="#dcdcdc" stroke-dasharray="5 1"/>;B:M0 14h2v2H0zM3 4h2v2H3zM11 10h2v2h-2zM14 0h2v2h-2z',
  ellipse: '<path d="M1 8c0-7 14-7 14 0s-14 7-14 0z" fill="none" stroke="#dcdcdc" stroke-dasharray="5 2"/>;B:M7 2h2v2H7zM0 7h2v2H0zM14 7h2v2h-2z', ellarc: 'w:M15 6C13 1 1 2 1 8c0 3 3 5 6 5;B:M7 7h2v2H7zM14 7h2v2h-2zM7 12h2v2H7z',
  insert: `B:M7 0h5l4 4v9H7z;w:M1.500 5.500h9v7h-9z;w:${C(10, 12, 3.5)};W:M0 12h3v3H0zM16 12v4h-4z`, mkblock: `w:M1.500 5.500h9v7h-9z;w:${C(10, 12, 3.5)};W:M0 12h3v3H0z;y:M11 0v8M7 4h8M8 1l6 6M14 1L8 7`,
  points: 'W:M7 2h2v2H7zM2 7h2v2H2zM12 7h2v2h-2zM7 12h2v2H7z',
  hatch: 'w:M2.500 0v16M13.500 0v16M0 2.500h16M0 13.500h16;b:M4 8l4-4M4 12l8-8M8 12l4-4', gradient: 'w:M2.500 0v16M13.500 0v16M0 2.500h16M0 13.500h16;B:M4 9h8v3H4z;<path d="M4 4h8v5H4z" fill="#4a7196"/>',
  region: `W:M0 2h11l5 5v7H0z;K:${C(8, 8, 2.5)}`, table: 'w:M.500 1.500h15v13H.500zM0 5h16M0 8h16M0 11h16M5 5v10M10 5v10;W:M0 1h16v2H0z',
  mtext: '<path d="M2 15L8 1l6 14M4 10h8" fill="none" stroke="#dcdcdc" stroke-width="2"/>', addsel: `G:${C(3, 4, 3.5)};B:${C(12, 12, 3.5)};w:M8 3h5v4M11 5l2 2 2-2`,
  erase: 'Y:M6 9L14 0h2v4l-8 7z;R:' + C(5, 12, 2.5) + ';W:M6 9l2 2-2 2-2-3z;b:M8 15.500h8;w:M0 15.500h3', copyobj: `w:${C(3.5, 3.5, 3)};w:M9 3h4v4M11 5l2 2 2-2;b:${C(7.5, 12, 3)}${C(13, 12, 3)}`,
  mirror: 'w:M6.500 2v12.500H.500z;b:M9.500 2v12.500h6z', offset: 'b:M16 2H7a6 6 0 0 0 0 12h9;w:M16 5H8a3 3 0 0 0 0 6h8', array: 'w:M1.500 1.500h5v5h-5z;b:M9.500 1.500h5v5h-5zM1.500 9.500h5v5h-5zM9.500 9.500h5v5h-5z;W:M16 11v5h-5z',
  move: 'w:M8 2v12M2 8h12;W:M8 0l3 4H5zM8 16l3-4H5zM0 8l4-3v6zM16 8l-4-3v6z', rotate: 'w:M11 3a6.500 6.500 0 1 0 3 4;W:M9 0l4 3-4 3z',
  scale: 'b:M.500 6V.500h15v15H10;w:M.500 7.500h8v8h-8z', stretch: 'w:M7 12v3.500H.500V.500h6V8M5 11h6M9 9l2 2-2 2;b:M9 1h2l4.500 14.500H8', trim: `b:M0 1h7M9 1h1;w:M12 1h4M6 4l6 8M10 0l0 10;W:M9 2h2v6H9z;w:${C(9, 13, 1.8)}${C(13.5, 12, 1.8)}`,
  extend: 'w:M15 2v12M5 7h8M10 5l3 2-3 2M0 11h5;b:M6 11h8', breakpt: 'w:M9 3.500H.500v10h15v-10H13;b:M11.500 1v6', break: 'w:M3 4.500H.500v10h15v-10H13;b:M5.500 2v6M10.500 2v6',
  join: 'w:M0 8h4M12 8h4;B:M4 5l4 3-4 3zM12 5L8 8l4 3z', chamfer: 'w:M10 1h6M.500 16v-6;b:M1 9l8-8', fillet: 'w:M10 1h6M.500 16v-6;b:M.500 9C1 4 4 1 9 1', blend: 'w:M.500 16L2 9M15.500 0L14 8;b:M2 8c2-6 5-5 6 0s5 6 6 1',
  explode: 'w:M3.500 5.500h7v8h-7z;b:M.500 4v11h12M3 3l2-3h8l-2 3zM14 4l2-2v8l-2 3z',
  grid: 'w:M4 1v14M8 1v14M12 1v14M1 4h14M1 8h14M1 12h14', snap: 'W:M2 2h2v2H2zM7 2h2v2H7zM12 2h2v2h-2zM2 7h2v2H2zM7 7h2v2H7zM12 7h2v2h-2zM2 12h2v2H2zM7 12h2v2H7zM12 12h2v2h-2z',
  infer: 'W:M1 10h7v6H1z;w:M8.500 11V.500h6v5H9', dyn: 'w:M4 1v8M0 5h8;W:M6 9h10v5H6z', ortho: 'w:M.500 0v15.500H16M.500 11.500h4v4', polar: `w:${C(7, 9, 6)};w:M7 9h9M7 9l6-7`,
  iso: '<path d="M1 2l13 13" stroke="#ff5f5f"/>;g:M8 0v16;W:M7 7h3v3H7z', otrack: 'w:M15 2L1 14.500h15;W:M7 10h2v2H7z', osnap: 'w:M4.500 2.500h11v12h-12V7M.500.500h4v4h-4z',
  lweight: 'w:M0 2h16;W:M0 5h16v2H0zM0 9h16v2H0zM0 13h16v3H0z', transp: 'w:M.500.500h15v15H.500z;W:M2 2h3v3H2zM8 2h3v3H8zM5 5h3v3H5zM11 5h3v3h-3zM2 8h3v3H2zM8 8h3v3H8zM5 11h3v3H5zM11 11h3v3h-3z',
  cycle: 'G:M6 6h10v10H6z;w:M3 0v6M0 3h6M5 4.500h9', osnap3d: 'w:M4 10V5l4-4h8v7l-4 5H6M4 5h8v8M12 5l4-4;o:M.500 11.500h4v4h-4z', ducs: 'w:M2 2v12h12M0 4l2-3 2 3M12 12l3 2-3 2;W:M11 1L6 7h3l-1 4 5-6h-3z',
  filter: 'w:M3 14V5l3-3h9v8l-4 4zM3 5h8v9M11 5l4-3;B:M1 3h3v3H1zM9 3h3v3H9zM1 12h3v3H1zM9 12h3v3H9z', gizmo: `w:M8 1v8l-6 5M8 9l6 5M8 1l6 5v7H2V6z;W:${C(8, 2, 2)}${C(2, 13, 2)}${C(14, 13, 2)}`,
  annvis: `W:M6 1l3 5-1 3 4 7H9l-3-4-3 4H0l4-7-1-3z;w:${C(13, 4, 2.5)}`, annauto: 'W:M6 1l3 5-1 3 4 7H9l-3-4-3 4H0l4-7-1-3zM13 0l-3 5h2l-1 4 5-6h-3z', ann: 'W:M8 1l3 5-1 3 4 7h-3l-3-4-3 4H2l4-7-1-3z',
  gear: `W:M7 0h3v3l3-2 2 2-2 3h3v3h-3l2 3-2 2-3-2v3H7v-3l-3 2-2-2 2-3H1V6h3L2 3l2-2 3 2z;K:${C(8.5, 7.5, 2.5)}`, add: '<path d="M8 0v16M0 8h16" stroke="#dcdcdc" stroke-width="2"/>',
  ruler: 'W:M4 0h8v2H9v2h3v1H8v2h4v2H9v1h3v2H8v2h4v2H4z', qprops: 'w:M2.500.500h11v15h-11zM7 4h5M7 7h5M7 10h5M7 13h5;W:M4 3h2v2H4zM4 6h2v2H4zM4 9h2v2H4zM4 12h2v2H4z',
  lockui: 'w:M6 11.500H.500v-10h14V6;W:M0 1h15v2H0zM8 10h7v6H8z;w:M12 10V7.500h4V10', isolate: `w:M1.500.500h5v5h-5zM8 9l4 6H4z;w:${C(12.5, 6, 2.5)}`, perf: `W:${C(8, 8, 8)};<circle cx="8" cy="8" r="6" fill="#8fb4dc"/>;w:M6 10l6-6`,
  trusted: '<path d="M2 0h8l5 5v8H2z" fill="#2f6fc0"/>;w:M0 6h12M5 1v9;Y:M0 10h7v6H0z;<path d="M8 12l3 3 5-5" fill="none" stroke="#4fcf7d" stroke-width="2"/>',
  full: 'w:M.500 2.500h15v11H.500zM9 8l3-3M10 5h2.500v2M7 9l-3 3M3.500 9.500V12H6', menu: '<path d="M0 2h16M0 8h16M0 14h16" stroke="#dcdcdc" stroke-width="2"/>',
};
ICONS.saveas = ICONS.save + ';Y:M6 14l5-7 3 2-5 7-3 0z;R:M11 7l2-2 3 2-2 2z';

const draw = (spec) => spec.split(';').filter(Boolean).map((part) =>
  part[0] === '<' ? part : `<path class="${part[0]}" d="${part.slice(2)}"/>`).join('');
const ARROW = '<svg viewBox="0 0 8 5"><path class="W" d="M0 0h8L4 5z"/></svg>';

document.querySelectorAll('[data-tools]').forEach((host) => {
  host.innerHTML = host.dataset.tools.split(' ').map((token) => {
    if (token === '|') return '<i class="sep"></i>';
    if (token.toLowerCase() === 'v' || token === 'vOff') return `<button class="drop${token === 'vOff' ? ' off' : ''}" aria-label="更多">${ARROW}</button>`;
    const off = token.endsWith('Off');
    const on = token.endsWith('*');
    const name = token.replace(/Off$|\*$/, '');
    return `<button class="tool${off ? ' off' : ''}${on ? ' on' : ''}" aria-label="${name}"><svg class="icon" viewBox="0 0 16 16">${draw(ICONS[name])}</svg></button>`;
  }).join('');
});
```
